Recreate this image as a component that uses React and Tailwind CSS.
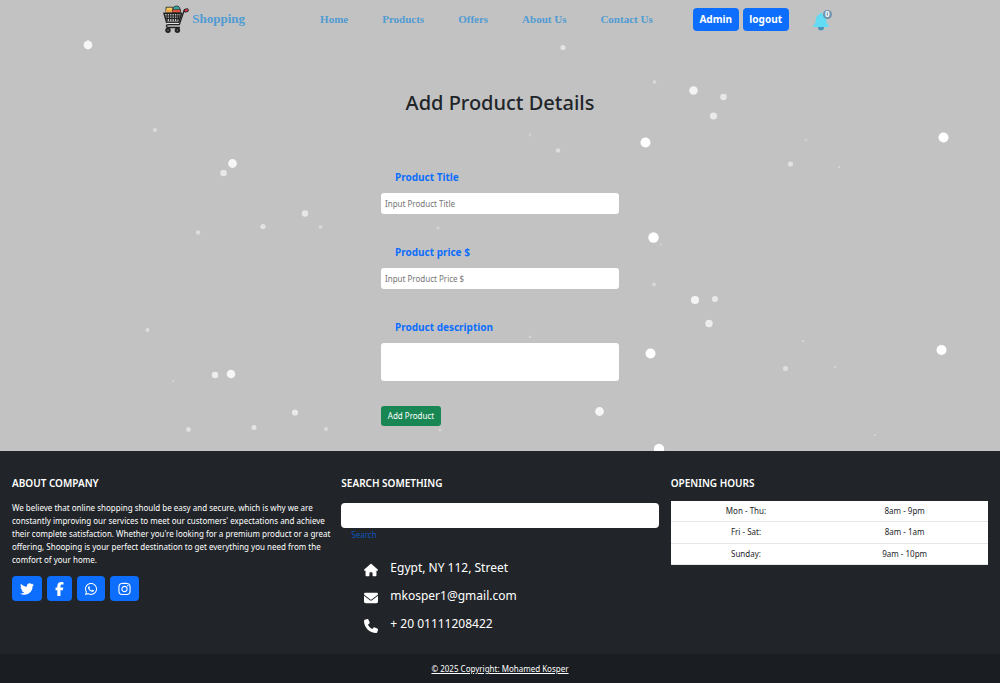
import React from "react";
import {
  FaTwitter,
  FaFacebookF,
  FaWhatsapp,
  FaInstagram,
  FaHouse,
  FaEnvelope,
  FaPhone,
} from "react-icons/fa6";

const navLinks = ["Home", "Products", "Offers", "About Us", "Contact Us"];

// Snowflakes: x (per mille of the width), y, radius, opacity
const flakes = [
  [88, 45, 4.4, 0.85], [155, 130, 2, 0.4], [232.5, 163.5, 4.4, 0.85], [223.5, 173, 3.3, 0.6],
  [305, 213.5, 3.2, 0.6], [263, 226.5, 2.6, 0.55], [320.5, 227, 2, 0.35], [198, 232.5, 2.2, 0.45],
  [147.5, 330, 2, 0.45], [215, 375, 3.2, 0.7], [231, 374, 4.3, 0.85], [173, 381, 1.2, 0.25],
  [295, 412.5, 3.1, 0.65], [188.5, 429.5, 2.4, 0.5], [254, 427.5, 2.5, 0.55], [326, 429, 2, 0.4],
  [563, 47.5, 2.6, 0.55], [530, 135, 1.4, 0.25], [558, 150.5, 2.3, 0.45], [654.5, 82, 1.9, 0.35],
  [693.5, 90.5, 4.3, 0.8], [723.5, 97, 3.3, 0.6], [713.5, 116, 3.6, 0.65], [645.5, 142.5, 5, 1],
  [943.5, 137.5, 5, 1], [806, 140, 1.8, 0.18], [790.5, 164, 2.6, 0.5], [839, 167, 1, 0.4],
  [653.5, 237.5, 5.2, 1], [661, 244.5, 1.2, 0.25], [438, 228, 1.6, 0.3], [654, 284.5, 1.9, 0.35],
  [695, 300, 4.1, 0.8], [715, 299, 3.1, 0.6], [709, 323.5, 3.7, 0.7], [803, 341, 1.1, 0.35],
  [650.5, 353.5, 5, 1], [941.5, 350, 5, 1], [785.5, 368.5, 2.6, 0.45], [835, 367, 1, 0.4],
  [530, 337, 1.4, 0.3], [599.5, 411.5, 4.4, 0.85], [440, 430, 1.6, 0.3], [875, 435, 1, 0.35],
  [659, 449, 5.2, 1],
];

function Snow() {
  return (
    <svg aria-hidden="true" className="pointer-events-none absolute inset-0 h-full w-full" fill="#fff">
      {flakes.map(([x, y, r, o]) => (
        <circle key={`${x}-${y}`} cx={`${x / 10}%`} cy={y} r={r} opacity={o} />
      ))}
    </svg>
  );
}

function CartLogo() {
  return (
    <svg aria-hidden="true" viewBox="0 0 26 28" className="h-7 w-[26px]" fill="none">
      <path d="M3 2.200h7v5H3z" fill="#f6cf5c" stroke="#222" strokeWidth=".8" />
      <path d="M10 4c0-4 7-4 7 0v3h-7z" fill="#2fa7a0" stroke="#222" strokeWidth=".8" />
      <path d="M3 4.800h14v2.800H3z" fill="#f3a54a" />
      <path d="M9.500 4.600h8v3h-8z" fill="#e5533f" stroke="#222" strokeWidth=".6" />
      <path d="M1 8.200h17.600l-2.800 9H3.600z" stroke="#222" strokeWidth="1.5" strokeLinejoin="round" />
      <path
        d="M4.200 9v7M6.600 9v7M9 9v7M11.400 9v7M13.800 9v7M16 9l-.8 6M2.400 11h15M3 13.400h13.800"
        stroke="#222"
        strokeWidth="1.1"
      />
      <path d="M23.600 5.400h-2.400l-4.900 14.200H5.200c-2.400 0-2.400 2.900 0 2.900h11.300" stroke="#222" strokeWidth="1.3" strokeLinecap="round" />
      <path d="M4 18.400h12" stroke="#f2f2f2" strokeWidth=".8" />
      <path d="M22.600 5.600l1.200-.4" stroke="#222" strokeWidth="3.8" strokeLinecap="round" />
      <path d="M22.800 5.600l1-.4" stroke="#d9364a" strokeWidth="2.200" strokeLinecap="round" />
      <circle cx="5" cy="25.200" r="2.700" fill="#222" />
      <circle cx="14.400" cy="25.200" r="2.700" fill="#222" />
      <circle cx="5" cy="25.200" r=".8" fill="#777" />
      <circle cx="14.400" cy="25.200" r=".8" fill="#777" />
    </svg>
  );
}

function Bell() {
  return (
    <svg aria-hidden="true" viewBox="0 0 16 19" className="h-[19px] w-4">
      <circle cx="8" cy="15.500" r="3" fill="#4b93b8" />
      <path d="M8 .8c1 0 1.400.7 1.400 1.500 2.800.8 3.800 3.200 3.900 6.200 0 2.500 1 3.700 2.500 4.900v1.600H.2v-1.600c1.500-1.200 2.500-2.400 2.500-4.900.1-3 1.100-5.400 3.900-6.200C6.600 1.500 7 .8 8 .8z" fill="#63dbf5" />
    </svg>
  );
}

function Header() {
  return (
    <header className="relative flex h-[38px] items-center justify-center pr-2 font-['Liberation_Serif',serif] font-bold text-[#4f9bd3]">
      <a href="#home" className="flex items-center gap-[3px] text-[13px]">
        <CartLogo />
        Shopping
      </a>
      <nav className="ml-[75px] flex gap-[34px] text-[11px]">
        {navLinks.map((label) => (
          <a key={label} href={`#${label.toLowerCase().replace(" ", "-")}`}>
            {label}
          </a>
        ))}
      </nav>
      <div className="ml-10 flex gap-1 font-['Noto_Sans','Open_Sans',sans-serif] text-[10px] text-white">
        <button type="button" className="h-[23px] w-[46px] rounded bg-[#0d6efd]">Admin</button>
        <button type="button" className="h-[23px] w-[46px] rounded bg-[#0d6efd]">logout</button>
      </div>
      <button type="button" aria-label="Notifications" className="relative ml-6 pt-1">
        <Bell />
        <span className="absolute top-0.5 -right-[3px] flex h-[9px] w-[9px] items-center justify-center rounded-full bg-[#6c93ad] font-['Noto_Sans',sans-serif] text-[8px] leading-none text-white">
          0
        </span>
      </button>
    </header>
  );
}

function Field({ id, label, children }) {
  return (
    <div className="flex flex-col gap-2">
      <label htmlFor={id} className="pl-3.5 text-[10px] leading-4 font-bold text-[#0d6efd]">
        {label}
      </label>
      {children}
    </div>
  );
}

function ProductForm() {
  return (
    <form className="relative mx-auto mt-[54px] flex w-[238px] flex-col gap-[30px]">
      <Field id="title" label="Product Title">
        <input id="title" placeholder="Input Product Title" className="h-[21px] rounded-[3px] bg-white px-1 text-[8px] placeholder:text-[#757575]" />
      </Field>
      <Field id="price" label="Product price $">
        <input id="price" placeholder="Input Product Price $" className="h-[21px] rounded-[3px] bg-white px-1 text-[8px] placeholder:text-[#757575]" />
      </Field>
      <Field id="description" label="Product description">
        <textarea id="description" className="h-[38px] resize-none rounded-[3px] bg-white px-1 text-[8px]" />
      </Field>
      <button type="button" className="-mt-[5px] h-5 w-[60px] rounded-[3px] bg-[#198754] text-[8px] text-white">
        Add Product
      </button>
    </form>
  );
}

const socials = [
  ["Twitter", FaTwitter, "w-[14px]"],
  ["Facebook", FaFacebookF, "w-[9px]"],
  ["WhatsApp", FaWhatsapp, "w-3"],
  ["Instagram", FaInstagram, "w-[13px]"],
];

const contacts = [
  [FaHouse, "Egypt, NY 112, Street"],
  [FaEnvelope, "mkosper1@gmail.com"],
  [FaPhone, "+ 20 01111208422"],
];

const hours = [
  ["Mon - Thu:", "8am - 9pm"],
  ["Fri - Sat:", "8am - 1am"],
  ["Sunday:", "9am - 10pm"],
];

function Heading({ children }) {
  return <h2 className="text-[10px] leading-4 font-semibold uppercase">{children}</h2>;
}

function Footer() {
  return (
    <footer className="bg-[#212529] text-white">
      <div className="grid grid-cols-3 gap-3 px-3 pt-6 pb-4">
        <section>
          <Heading>About company</Heading>
          <p className="mt-2.5 -mr-2 text-[8px] leading-[13px]">
            We believe that online shopping should be easy and secure, which is why we are constantly
            improving our services to meet our customers' expectations and achieve their complete
            satisfaction. Whether you're looking for a premium product or a great offering, Shooping
            is your perfect destination to get everything you need from the comfort of your home.
          </p>
          <div className="mt-2.5 flex gap-[5px]">
            {socials.map(([name, Icon, width]) => (
              <a key={name} href={`#${name.toLowerCase()}`} aria-label={name} className="flex h-[25px] items-center rounded bg-[#0d6efd] px-2">
                <Icon className={`h-[14px] ${width}`} />
              </a>
            ))}
          </div>
        </section>
        <section>
          <Heading>Search something</Heading>
          <input id="search" type="search" className="mt-3 block h-[25px] w-full rounded bg-white px-2 text-[10px] text-black" />
          <label htmlFor="search" className="block pl-2.5 text-[8px] leading-[13px] text-[#0d55bd]">
            Search
          </label>
          <ul className="mt-[13px] text-[12px] leading-7">
            {contacts.map(([Icon, text]) => (
              <li key={text} className="flex items-center gap-3 pl-[23px]">
                <Icon className="mt-1 h-[14px] w-[14px]" />
                {text}
              </li>
            ))}
          </ul>
        </section>
        <section>
          <Heading>Opening hours</Heading>
          <table className="mt-2.5 h-16 w-full table-fixed bg-white text-center text-[8px] leading-5 text-[#212529]">
            <tbody>
              {hours.map(([day, time]) => (
                <tr key={day} className="border-b border-[#e4e7ea]">
                  <td className="pr-2">{day}</td>
                  <td className="pr-2">{time}</td>
                </tr>
              ))}
            </tbody>
          </table>
        </section>
      </div>
      <div className="bg-[#1a1d21] py-2 text-center text-[8px] leading-[13px]">
        <a href="#copyright" className="underline">© 2025 Copyright: Mohamed Kosper</a>
      </div>
    </footer>
  );
}

export default function App() {
  return (
    <div className="flex min-h-screen flex-col bg-[#1a1d21] font-['Noto_Sans','Open_Sans',sans-serif]">
      <main className="relative overflow-hidden bg-[#c2c2c2] pb-[25px]">
        <Snow />
        <Header />
        <h1 className="relative mt-[52px] text-center text-[20px] leading-[25px] font-medium text-[#212529]">
          Add Product Details
        </h1>
        <ProductForm />
      </main>
      <Footer />
    </div>
  );
}
